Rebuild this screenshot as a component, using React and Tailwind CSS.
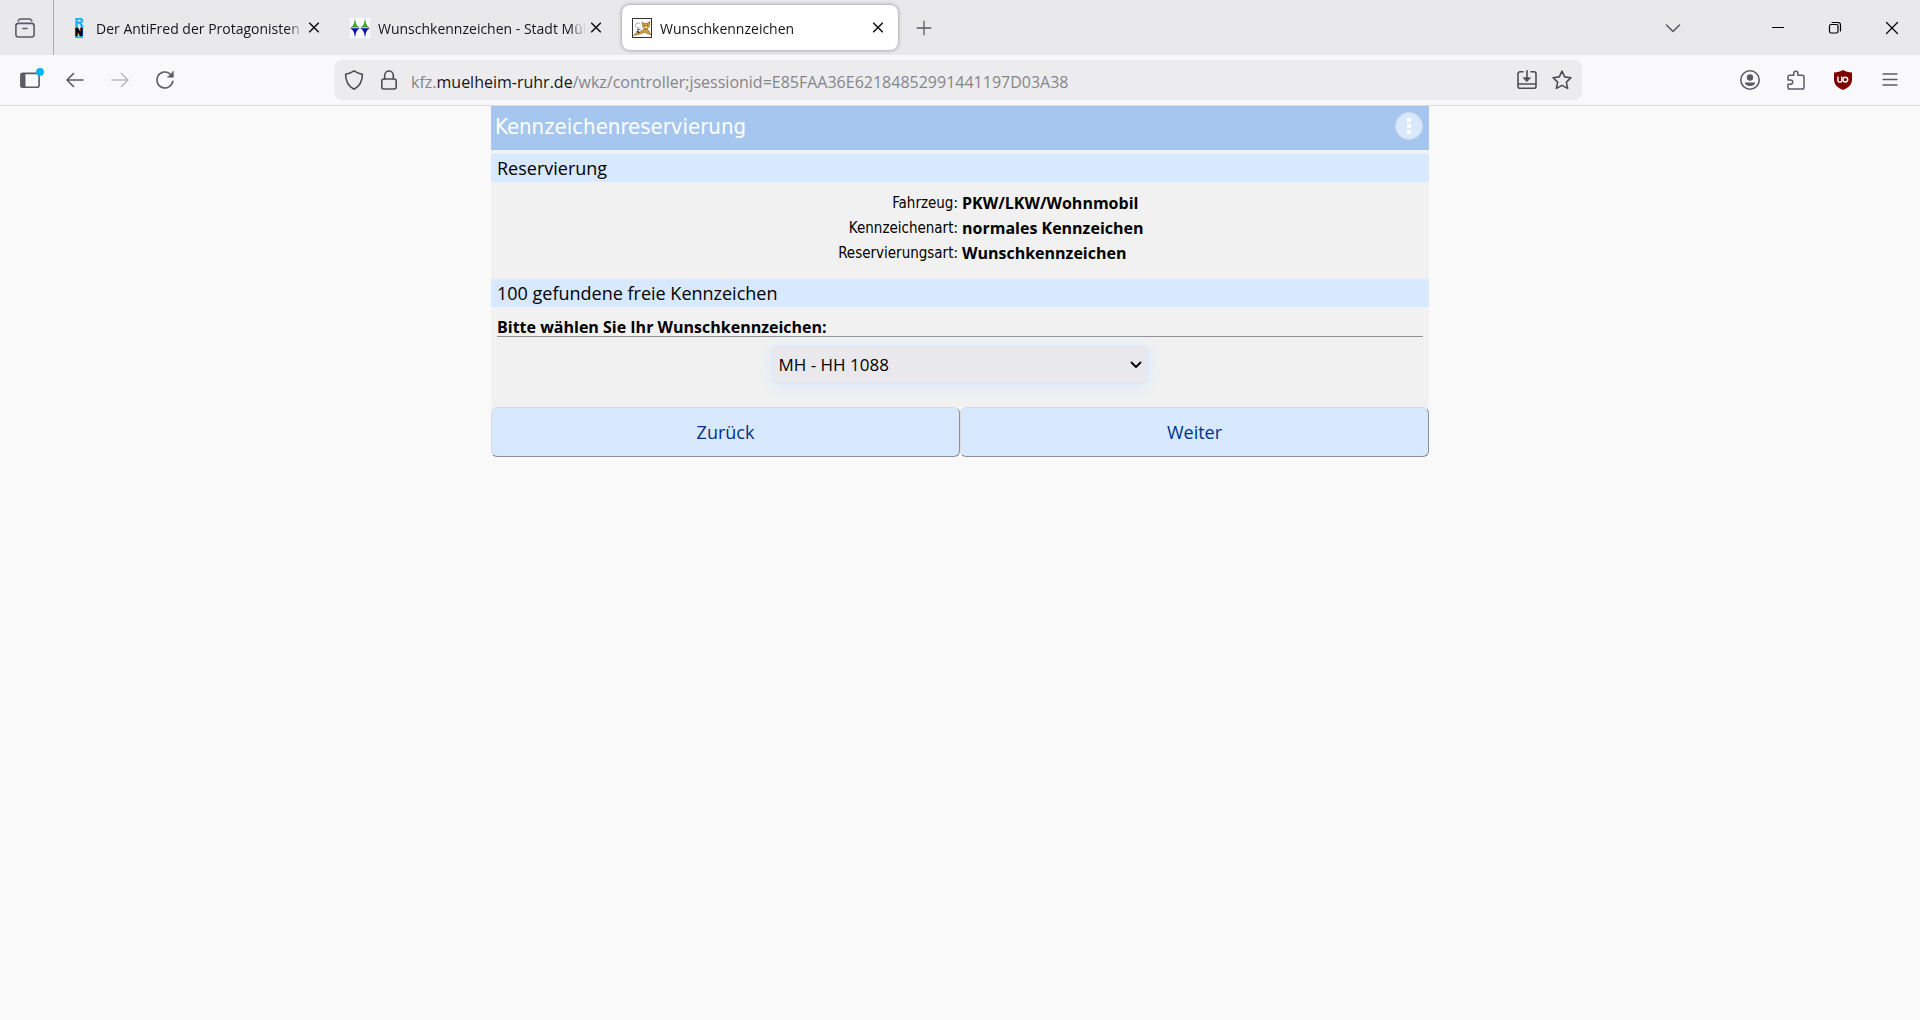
const ICON = { fill: "none", stroke: "currentColor", strokeWidth: 1.6, strokeLinecap: "round", strokeLinejoin: "round", "aria-hidden": true };

function Icon({ size = 20, className = "", children }) {
  return (
    <svg width={size} height={size} viewBox={`0 0 ${size} ${size}`} className={`shrink-0 ${className}`} {...ICON}>
      {children}
    </svg>
  );
}

function IconButton({ label, children, className = "" }) {
  return (
    <button type="button" aria-label={label} className={`flex shrink-0 items-center justify-center ${className}`}>
      {children}
    </button>
  );
}

function NewsFavicon() {
  return (
    <svg width="20" height="20" viewBox="0 0 20 20" className="shrink-0 font-['Liberation_Sans',sans-serif] font-bold" aria-hidden="true">
      <text x="11" y="9" textAnchor="middle" fontSize="12" fill="#18b0f5" stroke="#18b0f5" strokeWidth="0.6">R</text>
      <text x="11" y="17.5" textAnchor="middle" fontSize="11" fill="#000" stroke="#000" strokeWidth="1">N</text>
      <rect x="7" y="18.4" width="8" height="1.6" fill="#18b0f5" />
    </svg>
  );
}

function CityFavicon() {
  return (
    <svg width="20" height="20" viewBox="0 0 20 20" className="shrink-0" aria-hidden="true">
      <rect width="20" height="20" fill="#f8f8fa" />
      <path d="M5 .5 6 5.5 7.5 8 9.8 9.5H.2L2.5 8 4 5.5zM15 .5l1 5L17.5 8l2.3 1.5h-9.6L12.5 8 14 5.5z" fill="#43a62b" />
      <path d="M5 19.5l1-5L7.5 12l2.3-1.7H.2L2.5 12 4 14.5zM15 19.5l1-5 1.5-2.5 2.3-1.7h-9.6l2.3 1.7 1.5 2.5z" fill="#0a10a8" />
    </svg>
  );
}

function CatFavicon() {
  return (
    <svg width="20" height="20" viewBox="0 0 20 20" className="shrink-0" fill="none" aria-hidden="true">
      <rect x="0.5" y="0.5" width="19" height="19" fill="#fff" stroke="#333" />
      <path d="M1.5 17.5 4 14.8l4-.7 2.5-2.3 3.5-1.3 3 2.5 1.8 3.8-2.8-1-3.2-1.5-3.3 1.2-3.500 1.100z" fill="#d69a3c" stroke="#81612c" strokeWidth="0.6" />
      <path d="M10 4l2 1.5h3L18 3.5l-.7 5-2.2 2.7h-2.3L10.7 8.5z" fill="#d8a443" stroke="#6d5126" strokeWidth="0.6" />
      <path d="M12.2 7.3h.9M15 7.3h.9" stroke="#222" />
      <path d="M13.3 9.3h1.6" stroke="#fff" />
      <path d="M5.5 14.3C8.5 13 9 10 6.5 9.5c-3 0-4-1.5-2.5-3.5 1.2-1.6 3.5-1 4.200.2" stroke="#999" strokeWidth="0.9" />
      <path d="m4.8 13 2.5 1.7M5.5 11l1.5 1" stroke="#222" strokeWidth="1.2" />
    </svg>
  );
}

function Tab({ icon, title, active }) {
  return (
    <div
      role="tab"
      aria-selected={!!active}
      className={
        active
          ? "flex h-[45px] w-[276px] items-center gap-2 rounded-lg bg-white px-2.5 shadow-[0_0_4px_rgba(0,0,0,0.4)]"
          : "flex h-[45px] w-[276px] items-center gap-2 rounded-lg px-2.5"
      }
    >
      {icon}
      <span className="-mr-2 min-w-0 flex-1 overflow-hidden whitespace-nowrap pt-0.5 text-sm [mask-image:linear-gradient(to_left,transparent,black_16px)]">
        {title}
      </span>
      <IconButton label="Tab schließen" className="size-5">
        <Icon size={12} className="text-[#15141a]">
          <path d="M1.7 1.2 10.3 9.8M10.3 1.2 1.7 9.8" />
        </Icon>
      </IconButton>
    </div>
  );
}

function TabBar() {
  return (
    <header className="flex h-[55px] items-center bg-[#e9e9eb] text-[#15141a]">
      <IconButton label="Firefox View" className="h-full w-[54px] border-r border-[#acacb0] pr-1 text-[#5b5b66]">
        <Icon>
          <rect x="0.9" y="5.4" width="18.2" height="13.6" rx="2.5" />
          <path d="M3.2 2.8C3.8 1.5 4.6 1 5.6 1h8.8c1 0 1.8.5 2.4 1.8M8 10.5h4" />
        </Icon>
      </IconButton>
      <div role="tablist" className="ml-1 flex gap-1.5">
        <Tab icon={<NewsFavicon />} title="Der AntiFred der Protagonisten" />
        <Tab icon={<CityFavicon />} title="Wunschkennzeichen - Stadt Mülheim" />
        <Tab icon={<CatFavicon />} title="Wunschkennzeichen" active />
      </div>
      <IconButton label="Neuer Tab" className="ml-3.5 size-6 text-[#5b5b66]">
        <Icon size={16}>
          <path d="M8 1.2v13.6M1.2 8h13.6" strokeWidth="1.3" />
        </Icon>
      </IconButton>
      <IconButton label="Alle Tabs auflisten" className="ml-auto w-14 text-[#5b5b66]">
        <Icon size={16}>
          <path d="M1.5 5 8 11.5 14.5 5" />
        </Icon>
      </IconButton>
      <div className="ml-12 flex text-black">
        <IconButton label="Minimieren" className="w-[57px]">
          <Icon size={12}>
            <path d="M0 5.5h12" strokeWidth="1" />
          </Icon>
        </IconButton>
        <IconButton label="Verkleinern" className="w-[57px]">
          <Icon size={14}>
            <rect x="1.5" y="3.5" width="8.5" height="8.5" rx="1.5" strokeWidth="1.2" />
            <path d="M4 1.5h6A2.5 2.5 0 0 1 12.5 4v6" strokeWidth="1.2" />
          </Icon>
        </IconButton>
        <IconButton label="Schließen" className="w-[57px]">
          <Icon size={14}>
            <path d="m1.5 1.5 11 11M12.5 1.5l-11 11" strokeWidth="1.2" />
          </Icon>
        </IconButton>
      </div>
    </header>
  );
}

function AddressBar() {
  return (
    <div className="flex h-10 min-w-0 flex-1 items-center rounded-lg bg-[#ececee] px-2.5 text-[#4d4d55]">
      <IconButton label="Schutzmaßnahmen" className="w-5">
        <Icon>
          <path d="M10 .9C7.5 2.7 4.8 3.6 1.6 4.2c0 7 2.7 12 8.4 15 5.7-3 8.4-8 8.4-15C15.2 3.6 12.5 2.7 10 .9z" />
        </Icon>
      </IconButton>
      <IconButton label="Verbindung sicher" className="ml-[15px] w-5">
        <Icon>
          <rect x="2.8" y="9" width="14.4" height="10" rx="2" />
          <path d="M5.7 9V5.3a4.3 4.3 0 0 1 8.6 0V9" />
        </Icon>
      </IconButton>
      <p className="ml-3 min-w-0 flex-1 truncate pt-1 text-base leading-6 text-[#85858b]">
        kfz.<span className="text-[#15141a]">muelheim-ruhr.de</span>/wkz/controller;jsessionid=E85FAA36E62184852991441197D03A38
      </p>
      <IconButton label="App installieren" className="w-5">
        <Icon>
          <path d="M6 1.8H3a2 2 0 0 0-2 2v12.400a2 2 0 0 0 2 2h14a2 2 0 0 0 2-2V3.800a2 2 0 0 0-2-2h-3M1 14h18M10 .8v9.5" />
          <path d="M6.5 7.8h7L10 11.5z" fill="currentColor" strokeWidth="0.8" />
        </Icon>
      </IconButton>
      <IconButton label="Lesezeichen setzen" className="ml-[15px] w-5">
        <Icon>
          <path d="m10 1.2 2.7 5.7 6.3.8-4.6 4.4 1.2 6.3L10 15.4l-5.6 3 1.2-6.3L1 7.7l6.3-.8z" />
        </Icon>
      </IconButton>
    </div>
  );
}

function Toolbar() {
  return (
    <nav className="flex h-[51px] items-center border-b border-[#dcdce0] bg-[#f9f9fb] text-[#5b5b66]">
      <div className="flex w-[334px] shrink-0 items-center pl-5">
        <IconButton label="Seitenleiste" className="w-6">
          <Icon size={24}>
            <rect x="0.9" y="5.4" width="18.2" height="13.8" rx="2" />
            <path d="M1.2 5.7h4v13.2h-4z" fill="currentColor" strokeWidth="0.5" />
            <circle cx="20" cy="3.9" r="3.9" fill="#00b3f4" stroke="none" />
          </Icon>
        </IconButton>
        <IconButton label="Zurück" className="ml-[21px] w-5">
          <Icon>
            <path d="M18 10H2M8.5 3.5 2 10l6.5 6.5" />
          </Icon>
        </IconButton>
        <IconButton label="Vor" className="ml-[25px] w-5 text-[#bcbcc1]">
          <Icon>
            <path d="M2 10h16M11.5 3.5 18 10l-6.5 6.5" />
          </Icon>
        </IconButton>
        <IconButton label="Neu laden" className="ml-[25px] w-5">
          <Icon>
            <path d="M17.8 11.2A8 8 0 1 1 15.2 4" />
            <path d="M18.4 1.4v5.8h-5.8z" fill="currentColor" strokeWidth="0.5" />
          </Icon>
        </IconButton>
      </div>
      <AddressBar />
      <div className="flex w-[338px] shrink-0 items-center justify-end pr-5">
        <IconButton label="Konto" className="w-5">
          <Icon>
            <circle cx="10" cy="10" r="9.2" />
            <circle cx="10" cy="7.5" r="3.2" fill="currentColor" stroke="none" />
            <path d="M4.8 12.5h10.4c0 1.900-2.200 3.500-5.200 3.500s-5.200-1.600-5.200-3.500z" fill="currentColor" stroke="none" />
          </Icon>
        </IconButton>
        <IconButton label="Erweiterungen" className="ml-[26px] w-5">
          <Icon>
            <path d="M3.8 5.3h4V3.2a2 2 0 0 1 4 0v2.1h4.4A1.8 1.8 0 0 1 18 7.1v10.200a1.800 1.800 0 0 1-1.800 1.800H3.800A1.800 1.800 0 0 1 2 17.300v-3.100h2.600a2 2 0 0 0 0-4.200H2V7.100a1.800 1.800 0 0 1 1.800-1.800z" strokeWidth="1.5" />
          </Icon>
        </IconButton>
        <IconButton label="uBlock Origin" className="ml-[27px] w-5">
          <Icon>
            <path d="M10 0c2.5 1.7 5.5 2.4 9 2.5V9c0 5.5-3 8.5-9 11-6-2.5-9-5.5-9-11V2.5C4.5 2.4 7.5 1.7 10 0z" fill="#800000" stroke="none" />
            <path d="M5 7v3.200a1.900 1.900 0 0 0 3.800 0V7" stroke="#fff" strokeWidth="1.4" />
            <circle cx="12.3" cy="9.6" r="2.4" stroke="#fff" strokeWidth="1.4" />
          </Icon>
        </IconButton>
        <IconButton label="Menü" className="ml-[27px] w-5">
          <Icon>
            <path d="M3 4h14M3 9.5h14M3 15h14" strokeWidth="1.3" />
          </Icon>
        </IconButton>
      </div>
    </nav>
  );
}

const DETAILS = [
  ["Fahrzeug:", "PKW/LKW/Wohnmobil"],
  ["Kennzeichenart:", "normales Kennzeichen"],
  ["Reservierungsart:", "Wunschkennzeichen"],
];

function Band({ children }) {
  return <h2 className="bg-[#d8e8ff] px-1.5 text-lg leading-7">{children}</h2>;
}

function ActionButton({ children }) {
  return (
    <button
      type="button"
      className="h-[50px] rounded-md border border-b-[#8f8f8f] border-l-[#dcdcdc] border-r-[#8f8f8f] border-t-[#dcdcdc] bg-[#d8e8ff] text-lg text-[#003388]"
    >
      {children}
    </button>
  );
}

function Reservation() {
  return (
    <main className="mx-auto w-full max-w-[938px] text-black">
      <div className="bg-[#f1f1f1] pb-[23px]">
        <div className="mb-1 flex h-11 items-start justify-between bg-[#a5c6ef] pl-1 pr-1.5">
          <h1 className="pt-[5px] font-['DejaVu_Sans_Condensed',sans-serif] text-[22px] leading-8 text-white">Kennzeichenreservierung</h1>
          <button type="button" aria-label="Optionen" className="mt-1.5 flex size-7 flex-col items-center justify-center gap-0.5 rounded-full border border-[#d3dbe6] bg-[#d8e8ff]">
            <span className="size-1 bg-white" />
            <span className="size-1 bg-white" />
            <span className="size-1 bg-white" />
          </button>
        </div>
        <Band>Reservierung</Band>
        <dl className="grid grid-cols-2 gap-x-1 pb-[13px] pt-[9px] leading-[25px]">
          {DETAILS.map(([label, value]) => (
            <div key={label} className="contents">
              <dt className="text-right font-['DejaVu_Sans_Condensed',sans-serif] text-[15px]">{label}</dt>
              <dd className="font-bold">{value}</dd>
            </div>
          ))}
        </dl>
        <Band>100 gefundene freie Kennzeichen</Band>
        <div className="px-1.5 pt-3">
          <label htmlFor="plate" className="block border-b border-[#8f9195] font-bold leading-[17px]">
            Bitte wählen Sie Ihr Wunschkennzeichen:
          </label>
        </div>
        <div className="relative mx-auto mt-[9px] flex w-2/5 items-center">
          <select
            id="plate"
            defaultValue="MH - HH 1088"
            className="h-[38px] w-full appearance-none rounded-md border border-[#d8e8ff] bg-[#e9e9ed] px-[5px] text-[17px] shadow-[0_2px_15px_#d8e8ff]"
          >
            <option>MH - HH 1088</option>
          </select>
          <Icon size={12} className="pointer-events-none absolute right-1.5">
            <path d="M1.5 3.5 6 8l4.5-4.5" strokeWidth="1.8" />
          </Icon>
        </div>
      </div>
      <div className="grid grid-cols-2">
        <ActionButton>Zurück</ActionButton>
        <ActionButton>Weiter</ActionButton>
      </div>
    </main>
  );
}

export default function App() {
  return (
    <div className="min-h-screen bg-[#f9f9f9] font-['Open_Sans',sans-serif]">
      <TabBar />
      <Toolbar />
      <Reservation />
    </div>
  );
}
